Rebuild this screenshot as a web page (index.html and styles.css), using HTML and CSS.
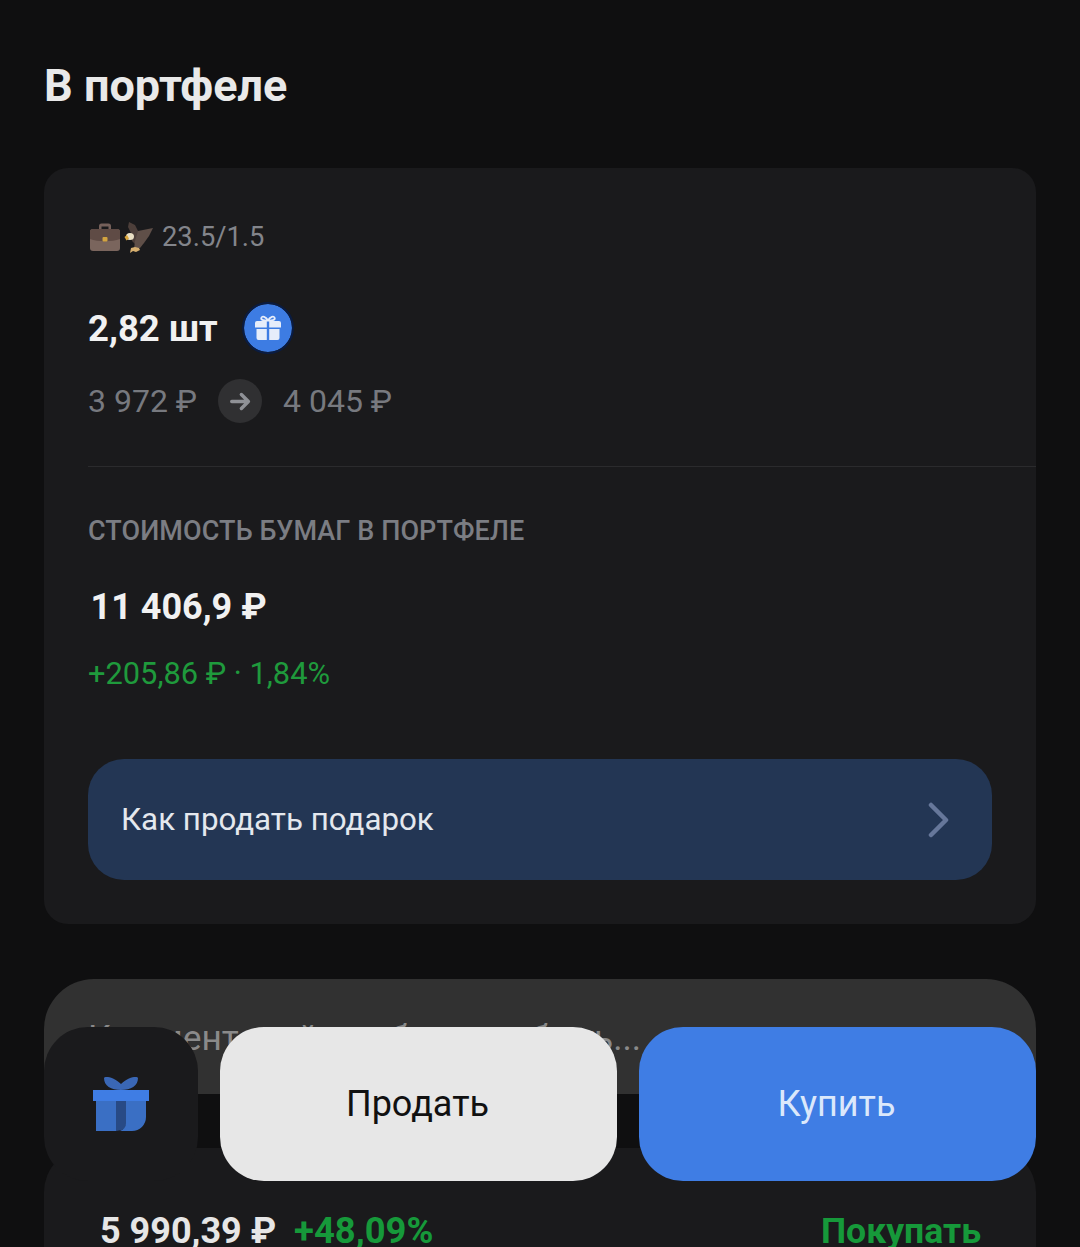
FILE: index.html
```html
<!DOCTYPE html>
<html lang="ru">
<head>
<meta charset="utf-8">
<title>В портфеле</title>
<link rel="stylesheet" href="styles.css">
</head>
<body>
<main class="page">
  <h1 class="title">В портфеле</h1>
  <section class="card">
    <div class="top">
      <div class="tag">
        <svg class="emoji" viewBox="0 0 66 36" width="66" height="36" aria-hidden="true">
          <path d="M11 11V7a2.500 2.500 0 0 1 2.500-2.500h7A2.500 2.500 0 0 1 23 7v4h-2.500V7.500h-7V11z" fill="#75605a"/>
          <rect x="2" y="10" width="30" height="22" rx="3" fill="#7a655d"/>
          <path d="M2 13a3 3 0 0 1 3-3h24a3 3 0 0 1 3 3v7c-8 3-22 3-30 0z" fill="#5f4b45"/>
          <rect x="14.500" y="18" width="5" height="4.500" rx="1" fill="#d3a440"/>
          <path d="M41 3l6 3 4 8-3 12-4-4-1-8-3-6z" fill="#4d3f3a"/>
          <path d="M50 12l15-3-4 8-5 7-4 5-6 1 1-8z" fill="#5f4f48"/>
          <ellipse cx="42" cy="17.500" rx="4" ry="3.500" fill="#e9dfc4"/>
          <path d="M39 16l-2.500 2 2 3.500 2.500-2z" fill="#d9a53a"/>
          <path d="M43 29l4-1 4 1 1 2-4 2-3-1-3 2z" fill="#d8b070"/>
        </svg>
        <span>23.5/1.5</span>
      </div>
      <div class="qty">
        <span>2,82 шт</span>
        <span class="gift-badge">
          <svg viewBox="0 0 28 28" width="28" height="28" aria-hidden="true">
            <path d="M14 6.500C12 2.500 8 1.500 7.300 4c-.6 2.200 3 2.700 6.700 2.500zm0 0c2-4 6-5 6.700-2.500.6 2.200-3 2.700-6.700 2.500z" fill="none" stroke="#e6edfa" stroke-width="1.800"/>
            <path d="M1 9a2 2 0 0 1 2-2h9.800v6.500H1zM15.200 7H25a2 2 0 0 1 2 2v4.500H15.200zM2.500 15h10.300v11H4.500a2 2 0 0 1-2-2zM15.200 15h10.300v9a2 2 0 0 1-2 2h-8.300z" fill="#e6edfa"/>
          </svg>
        </span>
      </div>
      <div class="prices">
        <span>3 972 ₽</span>
        <span class="arrow">
          <svg viewBox="0 0 24 24" width="21" height="21" aria-hidden="true">
            <path d="M2 12h19M13 4l8 8-8 8" fill="none" stroke="#8f9196" stroke-width="4" stroke-linecap="round" stroke-linejoin="round"/>
          </svg>
        </span>
        <span>4 045 ₽</span>
      </div>
    </div>
    <div class="value">
      <div class="label">СТОИМОСТЬ БУМАГ В ПОРТФЕЛЕ</div>
      <div class="sum">11 406,9 ₽</div>
      <div class="gain">+205,86 ₽ · 1,84%</div>
      <a class="how" href="#">
        <span>Как продать подарок</span>
        <svg viewBox="0 0 22 36" width="22" height="36" aria-hidden="true">
          <path d="M3 3l15 15L3 33" fill="none" stroke="#66779a" stroke-width="4.500" stroke-linecap="round" stroke-linejoin="round"/>
        </svg>
      </a>
    </div>
  </section>
  <section class="comment">Комментарий, чтобы не забыть...</section>
  <section class="quote">
    <div class="quote-left">
      <span class="quote-price">5 990,39 ₽</span>
      <span class="quote-change">+48,09%</span>
    </div>
    <span class="quote-action">Покупать</span>
  </section>
</main>
<div class="actions">
  <button class="icon-btn" type="button" aria-label="Подарок">
    <svg viewBox="0 0 56 56" width="56" height="56" aria-hidden="true">
      <path d="M28 14C18 14 11 10 11 2 11 0 20 0 28 8 36 0 45 0 45 2 45 10 38 14 28 14z" fill="#3a67b5"/>
      <rect x="0" y="14" width="56" height="11" fill="#3f7de4"/>
      <path d="M3 25h20v30H3z" fill="#3a6fc4"/>
      <path d="M23 25h10v22a7 7 0 0 1-4 7l-6 1z" fill="#284a85"/>
      <path d="M33 25h20v16a14 14 0 0 1-14 14H27a9 9 0 0 0 6-8z" fill="#3a6fc4"/>
    </svg>
  </button>
  <button class="sell" type="button">Продать</button>
  <button class="buy" type="button">Купить</button>
</div>
</body>
</html>
```

FILE: styles.css
```css
* { box-sizing: border-box; }
html, body {
  margin: 0;
  height: 1247px;
  overflow: hidden;
  background: #0f0f10;
}
body {
  position: relative;
  font-family: Roboto, "Liberation Sans", sans-serif;
  color: #ececec;
}
.page {
  padding: 0 44px;
  display: flex;
  flex-direction: column;
}
.title {
  margin: 0;
  padding-top: 62px;
  height: 168px;
  font-size: 45px;
  line-height: 48px;
  font-weight: 700;
  color: #e9e9e9;
}
.card {
  height: 756px;
  background: #1a1a1c;
  border-radius: 24px;
  padding-left: 44px;
}
.top {
  height: 299px;
  padding-top: 49px;
  border-bottom: 1px solid #2b2b2d;
}
.tag {
  display: flex;
  align-items: center;
  gap: 8px;
  height: 40px;
  font-size: 27.300px;
  color: #83858b;
}
.emoji { flex: none; width: 66px; height: 36px; }
.qty {
  display: flex;
  align-items: center;
  gap: 24px;
  margin-top: 44px;
  height: 54px;
  font-size: 36.500px;
  font-weight: 700;
  color: #f1f1f1;
}
.gift-badge {
  display: flex;
  align-items: center;
  justify-content: center;
  width: 52px;
  height: 52px;
  border-radius: 50%;
  background: #3d7ce3;
  background-clip: padding-box;
  border: 2px solid #0a1c42;
}
.prices {
  display: flex;
  align-items: center;
  gap: 21px;
  margin-top: 24px;
  height: 44px;
  font-size: 32px;
  color: #77797f;
}
.arrow {
  display: flex;
  align-items: center;
  justify-content: center;
  width: 44px;
  height: 44px;
  border-radius: 50%;
  background: #303032;
}
.value { padding-top: 47px; }
.label {
  font-size: 27px;
  line-height: 34px;
  font-weight: 500;
  letter-spacing: .08px;
  color: #7b7d83;
}
.sum {
  margin-top: 37px;
  margin-left: 2.500px;
  font-size: 36px;
  line-height: 44px;
  font-weight: 700;
  color: #f1f1f1;
}
.gain {
  margin-top: 25px;
  font-size: 30.800px;
  line-height: 40px;
  color: #1f9a3c;
}
.how {
  display: flex;
  align-items: center;
  justify-content: space-between;
  width: 904px;
  height: 121px;
  margin-top: 65px;
  padding: 0 42px 0 33px;
  border-radius: 36px;
  background: #233654;
  color: #e4e8ee;
  font-size: 31.300px;
  text-decoration: none;
}
.comment {
  margin-top: 55px;
  height: 115px;
  padding: 39px 44px 0;
  border-radius: 50px 50px 0 0;
  background: #313131;
  color: #8a8a8a;
  font-size: 35.300px;
  line-height: 40px;
}
.quote {
  margin-top: 54px;
  height: 130px;
  padding: 59px 55px 0 56px;
  display: flex;
  justify-content: space-between;
  border-radius: 44px 44px 0 0;
  background: #1a1a1c;
  font-size: 36px;
  line-height: 48px;
  font-weight: 700;
}
.quote-left { display: flex; gap: 18px; }
.quote-price { color: #e6e6e6; }
.quote-change { color: #16993a; font-size: 36.400px; }
.quote-action { color: #16993a; font-size: 35.600px; }
.actions {
  position: absolute;
  left: 44px;
  top: 1027px;
  width: 992px;
  height: 154px;
  display: flex;
  gap: 22px;
}
.actions button {
  height: 154px;
  border: 0;
  padding: 0 2px 0 0;
  border-radius: 44px;
  font: 400 36px Roboto, "Liberation Sans", sans-serif;
}
.actions .icon-btn {
  flex: none;
  width: 154px;
  padding: 0;
  background: #1a1a1c;
  display: flex;
  align-items: center;
  justify-content: center;
}
.actions .sell {
  flex: 1;
  background: #e7e7e7;
  color: #111;
}
.actions .buy {
  flex: 1;
  background: #3f7de4;
  color: #dbe8fb;
}
```
